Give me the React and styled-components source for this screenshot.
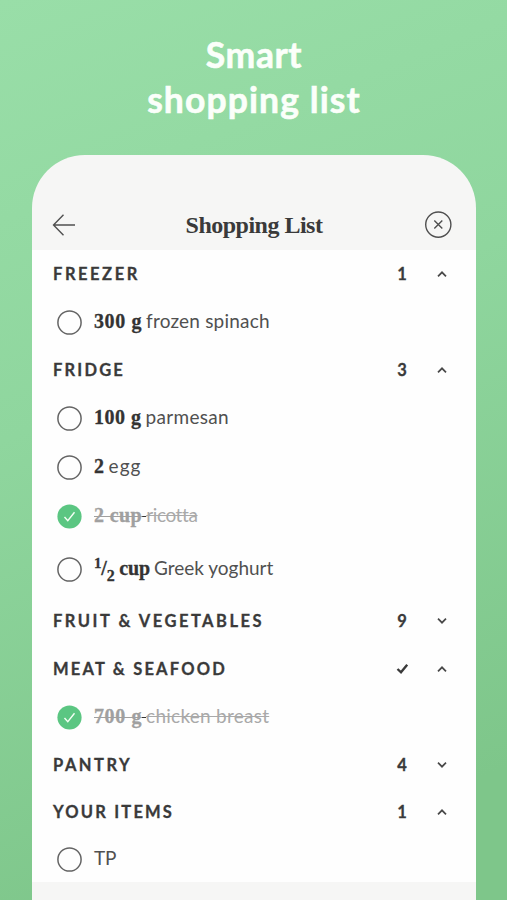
import styled, { createGlobalStyle } from "styled-components";

const GlobalStyle = createGlobalStyle`
    * {
        box-sizing: border-box;
    }
    body {
        margin: 0;
        font-family: "Lato", sans-serif;
        color: #3a3a3a;
    }
`;

const Page = styled.div`
    height: 900px;
    overflow: hidden;
    padding: 32px 31px 0 32px;
    background: linear-gradient(158deg, #99dea8 0%, #8fd69e 40%, #7ec68a 88%);
`;
const Headline = styled.h1`
    margin: 0 0 33px;
    height: 90px;
    font-size: 35.5px;
    font-weight: 700;
    line-height: 45px;
    text-align: center;
    color: #fbfffa;
    -webkit-text-stroke: 0.6px #fbfffa;
`;
const HeadlineLine = styled.span`
    display: block;
    letter-spacing: ${(props) => props.$spacing || 0}px;
`;

const Phone = styled.main`
    height: 760px;
    border-radius: 53px 53px 0 0;
    background: #f6f6f5;
    overflow: hidden;
`;
const TopBar = styled.header`
    display: grid;
    grid-template-columns: 28px 1fr 28px;
    align-items: center;
    height: 95px;
    padding: 44px 24px 0 20px;
`;
const Title = styled.h2`
    margin: 0;
    padding-left: 4px;
    font-family: "Liberation Serif", serif;
    font-size: 24px;
    font-weight: 700;
    line-height: 28px;
    letter-spacing: -0.5px;
    text-align: center;
`;
const IconButton = styled.button`
    display: flex;
    padding: 0;
    border: 0;
    background: none;
    color: #505050;
`;

const List = styled.div`
    background: #fefefe;
`;
const SectionRow = styled.div`
    display: flex;
    align-items: center;
    height: ${(props) => props.$height || 47}px;
    padding: 0 29px 0 21px;
    font-size: 16.5px;
    line-height: 20px;
    font-weight: 700;
    -webkit-text-stroke: 0.3px #3a3a3a;
`;
const SectionName = styled.span`
    flex: 1;
    letter-spacing: ${(props) => props.$spacing || 2}px;
`;
const Count = styled.span`
    display: flex;
    justify-content: center;
    width: 20px;
`;
const Chevron = styled.svg`
    margin-left: 25px;
    transform: ${(props) => (props.$open ? "none" : "rotate(180deg)")};
`;

const ItemRow = styled.div`
    display: flex;
    align-items: center;
    height: ${(props) => props.$height || 49}px;
    padding-left: 25px;
`;
const Circle = styled.svg`
    flex: none;
    margin: 2px 12px 0 0;
    fill: none;
`;
const ItemText = styled.span`
    font-size: 19px;
    line-height: 24px;
    margin-top: ${(props) => props.$shift || 0}px;
    color: ${(props) => (props.$done ? "#a9a9a9" : "#505050")};
    white-space: pre;
`;
const Amount = styled.b`
    font-family: "Liberation Serif", serif;
    font-size: 20px;
    letter-spacing: ${(props) => props.$spacing || 0}px;
    color: ${(props) => (props.$done ? "#a0a0a0" : "#333")};
    -webkit-text-stroke: 0.3px;
    text-decoration: ${(props) => (props.$done ? "line-through" : "none")};
    text-decoration-thickness: 1px;
`;
const Gap = styled.span`
    font-size: 16px;
    color: #333;
    text-decoration: ${(props) => (props.$done ? "line-through" : "none")};
`;
const Name = styled.span`
    letter-spacing: ${(props) => props.$spacing || 0}px;
    text-decoration: ${(props) => (props.$done ? "line-through" : "none")};
    text-decoration-thickness: 1px;
`;
const Numerator = styled.sup`
    font-size: 15px;
    line-height: 0;
    vertical-align: 7px;
`;
const Denominator = styled.sub`
    font-size: 16px;
    line-height: 0;
    vertical-align: -6px;
`;

const half = (
    <>
        <Numerator>1</Numerator>/<Denominator>2</Denominator> cup
    </>
);

const sections = [
    {
        name: "FREEZER", count: 1, open: true, spacing: 2.55,
        items: [{ amount: "300 g", amountSpacing: 0.6, name: "frozen spinach", spacing: 0.2 }],
    },
    {
        name: "FRIDGE", count: 3, open: true, spacing: 2.2,
        items: [
            { amount: "100 g", amountSpacing: 0.5, name: "parmesan", spacing: 0.3 },
            { amount: "2", amountSpacing: 0.5, name: "egg", spacing: 1 },
            { amount: "2 cup", amountSpacing: 0.4, name: "ricotta", spacing: -0.4, done: true },
            { amount: half, amountSpacing: -0.2, name: "Greek yoghurt", height: 57 },
        ],
    },
    { name: "FRUIT & VEGETABLES", count: 9, height: 48, spacing: 2.5, items: [] },
    {
        name: "MEAT & SEAFOOD", complete: true, open: true, spacing: 2.2,
        items: [{ amount: "700 g", amountSpacing: 0.6, name: "chicken breast", spacing: 0.25, done: true }],
    },
    { name: "PANTRY", count: 4, spacing: 2.5, items: [] },
    {
        name: "YOUR ITEMS", count: 1, open: true, spacing: 2.2,
        items: [{ name: "TP", height: 47, spacing: -0.3, shift: -1 }],
    },
];

const Item = ({ item }) => {
    return (
        <ItemRow $height={item.height}>
            <Circle width="25" height="25" viewBox="0 0 25 25">
                {item.done ? (
                    <>
                        <circle cx="12.5" cy="12.5" r="12.1" fill="#5bc682" />
                        <path d="M7.5 13 10.8 16.7 17.5 8.2" stroke="#f4fff5" strokeWidth="1.4" />
                    </>
                ) : (
                    <circle cx="12.5" cy="12.5" r="11.6" stroke="#646464" strokeWidth="1.5" />
                )}
            </Circle>
            <ItemText $done={item.done} $shift={item.shift}>
                {item.amount && (
                    <>
                        <Amount $done={item.done} $spacing={item.amountSpacing}>{item.amount}</Amount>
                        <Gap $done={item.done}> </Gap>
                    </>
                )}
                <Name $done={item.done} $spacing={item.spacing}>{item.name}</Name>
            </ItemText>
        </ItemRow>
    )
}

const Section = ({ section }) => {
    return (
        <section>
            <SectionRow $height={section.height}>
                <SectionName $spacing={section.spacing}>{section.name}</SectionName>
                <Count>
                    {section.complete ? (
                        <svg width="13" height="12" viewBox="0 0 13 12" fill="none" stroke="#3a3a3a" strokeWidth="2.4">
                            <path d="M1.5 6 5 9.3 11.2 1.8" />
                        </svg>
                    ) : section.count}
                </Count>
                <Chevron $open={section.open} width="10" height="8" viewBox="0 0 10 8" fill="none" stroke="#484848" strokeWidth="1.7">
                    <path d="M1 6.3 5 2.3 9 6.3" />
                </Chevron>
            </SectionRow>
            {section.items.map((item) => (
                <Item item={item} key={item.name} />
            ))}
        </section>
    )
}

const App = () => {
    return (
        <Page>
            <GlobalStyle />
            <Headline>
                <HeadlineLine $spacing={0.6}>Smart</HeadlineLine>
                <HeadlineLine $spacing={1.1}>shopping list</HeadlineLine>
            </Headline>
            <Phone>
                <TopBar>
                    <IconButton aria-label="Back">
                        <svg width="24" height="24" viewBox="0 0 24 24" fill="none" stroke="currentColor" strokeWidth="1.4">
                            <path d="M11.5 1.8 1.5 12 11.5 22.2M1.5 12H23" />
                        </svg>
                    </IconButton>
                    <Title>Shopping List</Title>
                    <IconButton aria-label="Close">
                        <svg width="28" height="28" viewBox="0 0 28 28" fill="none" stroke="currentColor" strokeWidth="1.4">
                            <circle cx="14.3" cy="13.6" r="12.6" />
                            <path d="m10.3 9.6 8 8m0-8-8 8" />
                        </svg>
                    </IconButton>
                </TopBar>
                <List>
                    {sections.map((section) => (
                        <Section section={section} key={section.name} />
                    ))}
                </List>
            </Phone>
        </Page>
    )
}

export default App
